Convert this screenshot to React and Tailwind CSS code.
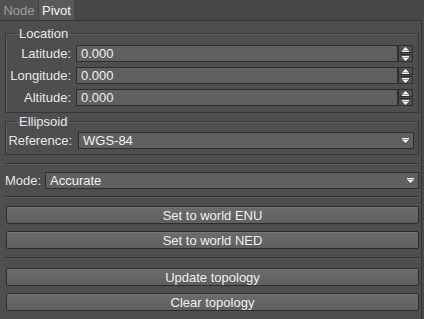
import React from "react";

const UpArrow = () => (
  <svg width="7" height="5" viewBox="0 0 7 5" className="block">
    <polygon points="3.5,0 7,3.5 0,3.5" fill="#f2f2f2" />
    <rect x="0" y="4" width="7" height="1" fill="#f2f2f2" />
  </svg>
);
const DownArrow = () => (
  <svg width="7" height="5" viewBox="0 0 7 5" className="block">
    <rect x="0" y="0" width="7" height="1" fill="#f2f2f2" />
    <polygon points="0,1.5 7,1.5 3.5,5" fill="#f2f2f2" />
  </svg>
);

function SpinRow({ label }) {
  return (
    <div className="flex items-center h-[17px]">
      <div className="w-[66px] text-right pr-[1px]">{label}</div>
      <div className="ml-[4px] w-[322px] h-[17px] bg-[#606060] border border-[#2e2e2e] flex items-center pl-[4px] text-[#f0f0f0]">
        0.000
      </div>
      <div className="w-[15px] h-[17px] flex flex-col gap-[1px]">
        <div className="h-[8px] bg-[#505050] border border-[#2e2e2e] flex items-center justify-center">
          <UpArrow />
        </div>
        <div className="h-[8px] bg-[#505050] border border-[#2e2e2e] flex items-center justify-center">
          <DownArrow />
        </div>
      </div>
    </div>
  );
}

function Combo({ text, className }) {
  return (
    <div
      className={
        "h-[17px] bg-[#606060] border border-[#2e2e2e] flex items-center justify-between pl-[4px] pr-[4px] text-[#f0f0f0] " +
        className
      }
    >
      <span>{text}</span>
      <DownArrow />
    </div>
  );
}

function Button({ text }) {
  return (
    <div className="ml-[6px] w-[413px] h-[18px] rounded-[2px] border border-[#2c2c2c] bg-gradient-to-b from-[#6c6c6c] to-[#5f5f5f] shadow-[inset_0_1px_0_#767676] flex items-center justify-center text-[#f0f0f0]">
      {text}
    </div>
  );
}

function Sep() {
  return <div className="ml-[5px] w-[414px] h-[2px] border-t border-[#333333] border-b border-b-[#5a5a5a]" />;
}

export default function App() {
  return (
    <div className="w-[424px] h-[319px] bg-[#4a4a4a] text-[13px] leading-[15px] text-[#e8e8e8] overflow-hidden" style={{ fontFamily: '"Liberation Sans", Arial, sans-serif' }}>
      <div className="h-[20px] flex items-stretch bg-[#474747]">
        <div className="w-[38px] bg-[#515151] text-[#9c9c9c] flex items-center justify-center pt-[1px]">Node</div>
        <div className="w-[36px] bg-[#5a5a5a] text-[#f4f4f4] flex items-center justify-center pt-[1px] border-l border-[#404040]">Pivot</div>
      </div>
      <div className="w-[422px] h-[299px] bg-[#4e4e4e] border-t border-r border-[#353535] flex flex-col">
        <fieldset className="mt-[5px] ml-[5px] w-[414px] h-[87px] border border-[#363636] shadow-[inset_1px_1px_0_#5c5c5c]">
          <legend className="ml-[10px] px-[3px]">Location</legend>
          <div className="mt-[4px] flex flex-col gap-[5px]">
            <SpinRow label="Latitude:" />
            <SpinRow label="Longitude:" />
            <SpinRow label="Altitude:" />
          </div>
        </fieldset>
        <fieldset className="mt-[1px] ml-[5px] w-[414px] h-[41px] border border-[#363636] shadow-[inset_1px_1px_0_#5c5c5c]">
          <legend className="ml-[10px] px-[3px]">Ellipsoid</legend>
          <div className="mt-[3px] flex items-center">
            <div className="w-[66px] text-right">Reference:</div>
            <Combo text="WGS-84" className="ml-[6px] w-[336px]" />
          </div>
        </fieldset>
        <div className="mt-[8px]">
          <Sep />
        </div>
        <div className="mt-[7px] flex items-center pl-[5px]">
          <div className="w-[40px]">Mode:</div>
          <Combo text="Accurate" className="w-[374px]" />
        </div>
        <div className="mt-[7px]">
          <Sep />
        </div>
        <div className="mt-[8px] flex flex-col gap-[7px]">
          <Button text="Set to world ENU" />
          <Button text="Set to world NED" />
        </div>
        <div className="mt-[8px]">
          <Sep />
        </div>
        <div className="mt-[9px] flex flex-col gap-[7px]">
          <Button text="Update topology" />
          <Button text="Clear topology" />
        </div>
      </div>
    </div>
  );
}
